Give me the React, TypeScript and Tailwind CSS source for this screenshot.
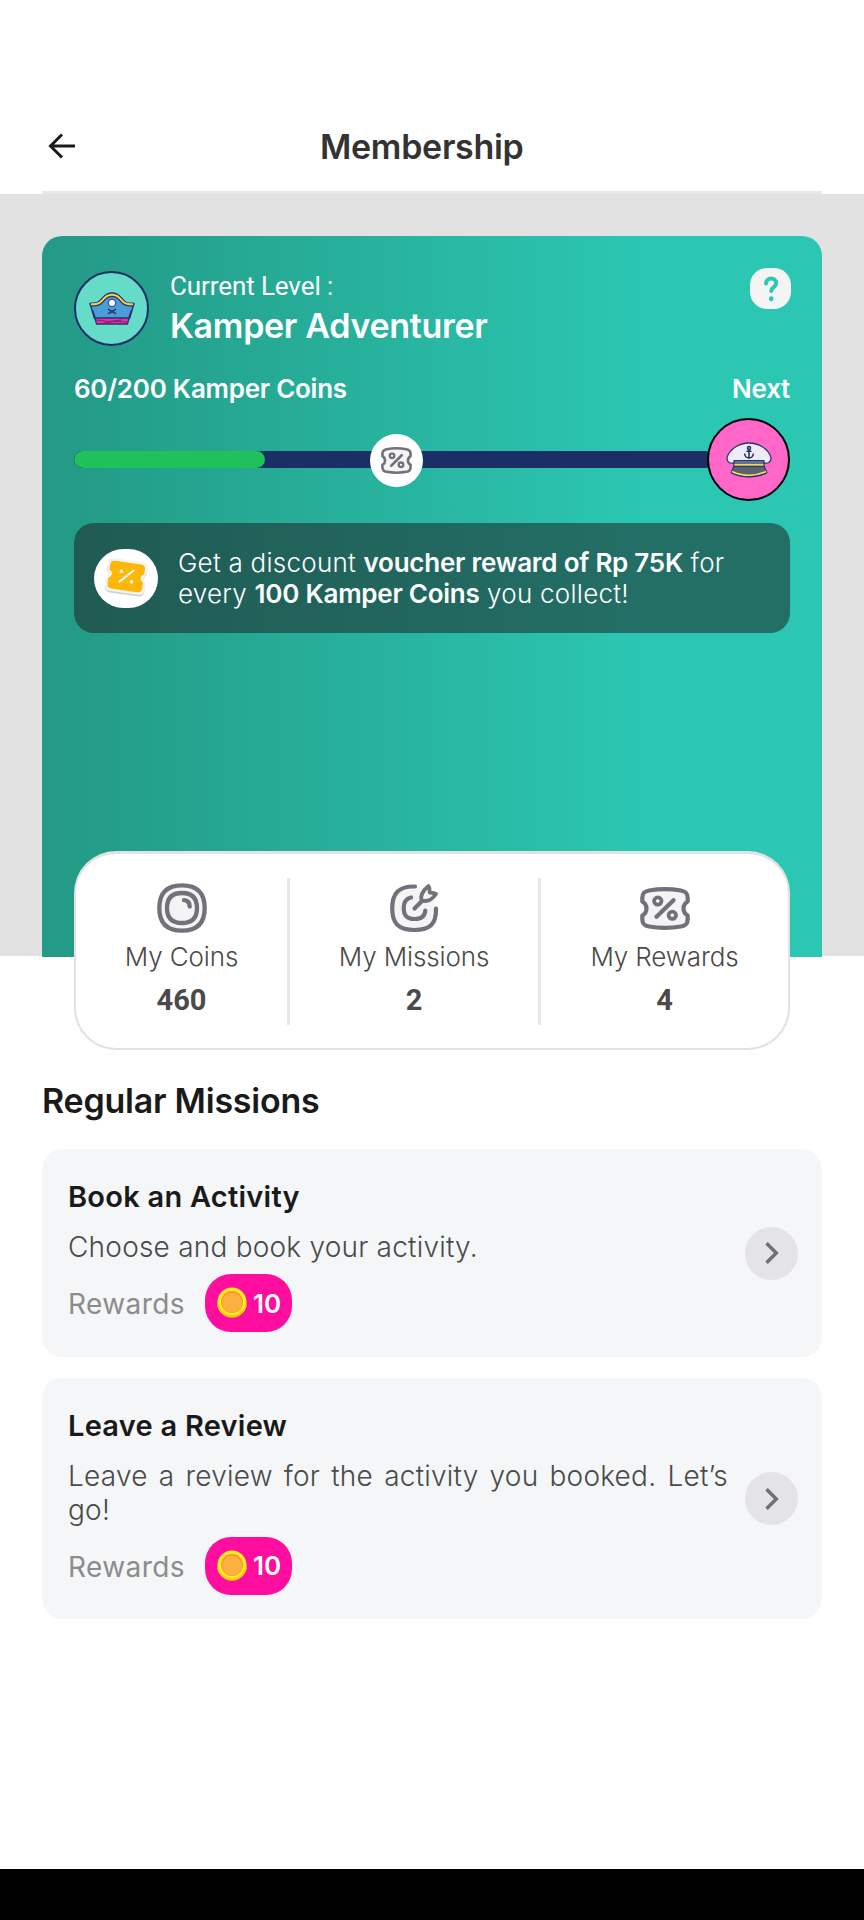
import type { ReactNode } from 'react';

const missions = [
  { title: 'Book an Activity', text: 'Choose and book your activity.', reward: 10, height: 'h-[208px]' },
  { title: 'Leave a Review', text: 'Leave a review for the activity you booked. Let’s go!', reward: 10, height: 'h-[241px]' },
];

function BackIcon() {
  return (
    <svg width="28" height="26" viewBox="0 0 28 26" fill="none" stroke="#1a1a1a" strokeWidth="3">
      <path d="M14 1.5 2.5 13 14 24.5M2.5 13H27" />
    </svg>
  );
}

function PirateHat() {
  return (
    <svg width="46" height="34" viewBox="0 0 46 34" strokeLinejoin="round">
      <path d="M1 11.5 5.5 26.5h35L45 11.5C36 12.5 35 9 32 5.5 27-.5 19-.5 14 5.5 11 9 9 12.5 1 11.5Z" fill="#4a9cdb" stroke="#24366f" strokeWidth="1.5" />
      <path d="M2 12.5c8 .8 10-2.5 13-5.8 4.5-5 11.5-5 16 0 3 3.3 5 6.6 13 5.8" fill="none" stroke="#24366f" strokeWidth="4" />
      <path d="M2 12.2c8 .8 10-2.5 13-5.8 4.5-5 11.5-5 16 0 3 3.3 5 6.6 13 5.8" fill="none" stroke="#f7d04a" strokeWidth="2" />
      <path d="M6 26h34l-1.5 6h-31Z" fill="#f72ba6" stroke="#24366f" strokeWidth="1.3" />
      <path d="m7 28 13 1.5L33 28M15 31l10-1.5 13 .5" fill="none" stroke="#7a2675" strokeWidth="1" />
      <circle cx="23" cy="11" r="3.8" fill="#f3f7ff" stroke="#24366f" strokeWidth="1" />
      <path d="M19 17q4 4 8 0M19 22q4-4 8 0" fill="none" stroke="#24366f" strokeWidth="1.3" />
      <path d="M3.5 18.5 6 25M42.5 18.5 40 25" stroke="#24366f" strokeWidth="1.5" />
    </svg>
  );
}

function CaptainHat() {
  return (
    <svg width="46" height="36" viewBox="0 0 46 36" strokeLinejoin="round" stroke="#2c3570">
      <path d="M8 21C3 22 1 19.5 1 15.5 4 6 14 1 23 1s19 5 22 14.5c0 4-2 6.5-7 5.5Z" fill="#ececf7" strokeWidth="1.3" />
      <path d="M8 24C7 27 6 29 5 30.5 16 36 30 36 41 30.5 40 29 39 27 38 24Z" fill="#5b6270" strokeWidth="1.2" />
      <path d="M5.8 29.5c11 5 23.4 5 34.4 0" fill="none" stroke="#f6dc4f" strokeWidth="1.7" />
      <path d="M5 31c11 5.3 25 5.3 36 0" fill="none" strokeWidth="1" />
      <path d="M8 18.5h30v6H8Z" fill="#66708f" strokeWidth="1.2" />
      <path d="M8.5 22.8h29" stroke="#f6dc4f" strokeWidth="1.5" />
      <g fill="none" stroke="#1f2c66" strokeWidth="1.5">
        <circle cx="23" cy="6" r="1.5" />
        <path d="M23 7.5v8M20.5 9.2h5M18.6 11.5c.4 3 2.2 4.5 4.4 4.5s4-1.5 4.4-4.5" />
      </g>
    </svg>
  );
}

function VoucherIcon({ width, height }: { width: number; height: number }) {
  return (
    <svg width={width} height={height} viewBox="0 0 50 44" preserveAspectRatio="none" stroke="#71717a" strokeWidth="4.2" strokeLinecap="round" strokeLinejoin="round">
      <path d="M2.3 14.8V11C2.3 5.8 4.8 4.3 9 3.5 19 1.8 31 1.8 41 3.5c4.2.8 6.7 2.3 6.7 7.5v3.8c-5.6 3.4-5.6 11 0 14.4V33c0 5.2-2.5 6.7-6.7 7.5-10 1.7-22 1.7-32 0-4.2-.8-6.7-2.3-6.7-7.5v-3.8c5.6-3.4 5.6-11 0-14.4Z" fill="#f4f4f5" />
      <path d="M33.5 13.5 16.5 30.5" />
      <circle cx="17.8" cy="14.4" r="3.7" fill="#fff" strokeWidth="3.8" />
      <circle cx="32.3" cy="29" r="3.7" fill="#fff" strokeWidth="3.8" />
    </svg>
  );
}

function CoinsIcon() {
  return (
    <svg width="50" height="50" viewBox="0 0 50 50" fill="#f4f4f5" stroke="#71717a" strokeWidth="4.3" strokeLinecap="round">
      <path d="M25 2.3C40 2.3 47.7 10 47.7 25S40 47.7 25 47.7 2.3 40 2.3 25 10 2.3 25 2.3Z" />
      <path d="M25 10C35 10 40 15 40 25S35 40 25 40 10 35 10 25 15 10 25 10Z" />
      <path d="M27 17.2c3.8.2 5.5 2.3 5.7 6.3" fill="none" />
    </svg>
  );
}

function MissionsIcon() {
  return (
    <svg width="50" height="50" viewBox="0 0 50 50" fill="none" stroke="#71717a" strokeWidth="4.2" strokeLinecap="round" strokeLinejoin="round">
      <path d="M26 3.5C10 3 3.2 10 3.2 25.5S10 47 25.5 47 47.5 41 47 25L44 12 35 5Z" fill="#f4f4f5" stroke="none" />
      <path d="M26 3.5C10 3 3.2 10 3.2 25.5S10 47 25.5 47 47.5 41 47 25.5" />
      <path d="M22 14.5c-5 1.2-7.3 4.5-7.3 10.5 0 7.5 3.2 11 10.8 11 7 0 10.3-2.5 10.8-8.5" />
      <path d="m25.5 25.5 8-8" />
      <path d="M32.5 17.5c-1.5-5 .5-9 7-14.5 1.5 2.5 1.2 4.5 1.2 6.5 2 .2 4 .2 6.3 1.5-4.5 6.5-9.5 8-14.5 6.5Z" fill="#f4f4f5" strokeWidth="3.8" />
    </svg>
  );
}

function RewardTicket() {
  return (
    <svg width="46" height="42" viewBox="0 0 46 42">
      <g transform="rotate(8 23 21)">
        <path d="M9 4.5h28q6 0 6 6v4c-3 2-3 7 0 9v7q0 6-6 6H9q-6 0-6-6v-7c3-2 3-7 0-9v-4q0-6 6-6Z" fill="#cfcfcf" transform="translate(0 1)" />
        <path d="M9 3h28q6 0 6 6v5.5c-3 2-3 7 0 9V30q0 6-6 6H9q-6 0-6-6v-6.5c3-2 3-7 0-9V9q0-6 6-6Z" fill="#f3f3f3" />
        <path d="M10 5.5h26q4.5 0 4.5 4.5v5c-4 1.5-4 6.5 0 8v6q0 4.5-4.5 4.5H10q-4.5 0-4.5-4.5v-6c4-1.5 4-6.5 0-8v-5q0-4.5 4.5-4.5Z" fill="#ffb606" />
        <path d="M29.5 12.5 17 25.5" stroke="#fff" strokeWidth="2" strokeLinecap="round" />
        <circle cx="17.5" cy="15" r="1.8" fill="#fff" />
        <circle cx="29" cy="24" r="1.8" fill="#fff" />
      </g>
    </svg>
  );
}

function GoldCoin() {
  return (
    <svg width="30" height="32" viewBox="0 0 30 32">
      <circle cx="15" cy="16.5" r="14.5" fill="#f7941e" />
      <circle cx="15" cy="15" r="14.5" fill="#fbed21" />
      <path d="M.8 17.5a14.5 14.5 0 0 0 28.4 0" fill="none" stroke="#fcd01f" strokeWidth="2" />
      <circle cx="15" cy="15" r="11" fill="#f7941e" />
      <circle cx="15" cy="15.8" r="10.2" fill="#fbb040" />
    </svg>
  );
}

function Stat({ icon, label, value, className }: { icon: ReactNode; label: string; value: number; className: string }) {
  return (
    <div className={`flex flex-col items-center ${className}`}>
      <div className="flex h-[50px] items-center">{icon}</div>
      <p className="mt-2 h-8 whitespace-nowrap text-[26px] leading-8 font-light tracking-[-0.13px] text-[#4a4a4a]">{label}</p>
      <p className="mt-[9px] h-9 font-[Roboto] text-[29px] leading-9 font-bold text-[#4a4a4a]">{value}</p>
    </div>
  );
}

export default function App() {
  return (
    <main className="flex h-[1920px] w-[864px] flex-col overflow-hidden bg-white font-[Inter,sans-serif]">
      {/* Header */}
      <header className="flex h-[194px] shrink-0 flex-col px-[42px] pt-[127px]">
        <div className="flex h-[64px] items-start">
          <div className="w-[278px] pt-[6px] pl-[6px]">
            <BackIcon />
          </div>
          <h1 className="text-[34px] leading-10 font-semibold tracking-[-0.3px] text-[#333]">Membership</h1>
        </div>
        <div className="h-[3px] bg-[#e8e8e8]" />
      </header>

      {/* Level card */}
      <section className="h-[762px] shrink-0 bg-[#e2e2e2] px-[42px] pt-[42px]">
        <div className="h-[721px] rounded-t-[20px] bg-[linear-gradient(90deg,#239b87_4%,#2bc7b2_77%)] px-8 pt-8 text-white">
          <div className="flex h-[82px]">
            <div className="mt-[3px] flex size-[75px] items-center justify-center rounded-full border-2 border-[#1c2f68] bg-[#65dcc8]">
              <PirateHat />
            </div>
            <div className="ml-[21px] flex-1">
              <p className="pt-[2px] font-[Roboto] text-[26px] leading-8 tracking-[-0.1px]">Current Level :</p>
              <p className="mt-[4px] text-[34px] leading-10 font-semibold tracking-[-0.3px]">Kamper Adventurer</p>
            </div>
            <div className="-mr-px flex size-[41px] items-center justify-center rounded-[17px] bg-[#f4f4f5]">
              <svg width="18" height="26" viewBox="0 0 18 26" fill="none" stroke="#2bc7b2" strokeWidth="4" strokeLinecap="round">
                <path d="M4 7.5C4.2 4.5 6.2 2.5 9.2 2.5s5 2 5 4.8c0 4-5 4.2-5 7.7" />
                <path d="M9.2 22.5v.6" strokeWidth="4.5" />
              </svg>
            </div>
          </div>

          <div className="mt-[23px] flex justify-between text-[26px] leading-8 font-semibold tracking-[-0.26px]">
            <p>60/200 Kamper Coins</p>
            <p>Next</p>
          </div>

          {/* Progress track with its milestones */}
          <div className="relative mt-[13px] flex h-[83px] items-center">
            <div className="h-[17px] w-[640px] overflow-hidden rounded-full bg-[#1b2f66]">
              <div className="h-full w-[191px] rounded-full bg-[#1fc15b]" />
            </div>
            <div className="absolute top-[16px] left-[296px] flex size-[53px] items-center justify-center rounded-full bg-white">
              <VoucherIcon width={31} height={27} />
            </div>
            <div className="absolute top-0 right-0 flex size-[83px] items-center justify-center rounded-full border-2 border-black bg-[#ff66c8]">
              <CaptainHat />
            </div>
          </div>

          <div className="mt-[22px] flex h-[110px] items-center rounded-[20px] bg-[#1e2728]/55 pl-5">
            <div className="flex h-[59px] w-16 items-center justify-center rounded-[30px] bg-white">
              <RewardTicket />
            </div>
            <p className="ml-[20px] whitespace-nowrap text-[26px] leading-[31px] font-light tracking-[0.25px]">
              Get a discount <span className="font-semibold tracking-[-0.25px]">voucher reward of Rp 75K</span> for
              <br />
              every <span className="font-semibold tracking-[-0.25px]">100 Kamper Coins</span> you collect!
            </p>
          </div>
        </div>
      </section>

      {/* Stats */}
      <section className="relative mx-[74px] -mt-[105px] flex h-[199px] shrink-0 rounded-[42px] border-2 border-t-[3px] border-[#e2e2e4] bg-white">
        <Stat className="w-[211px] pt-[29px]" icon={<CoinsIcon />} label="My Coins" value={460} />
        <div className="mt-[24px] h-[147px] w-[3px] bg-[#e7e7ea]" />
        <Stat className="w-[248px] pt-[29px]" icon={<MissionsIcon />} label="My Missions" value={2} />
        <div className="mt-[24px] h-[147px] w-[3px] bg-[#e7e7ea]" />
        <Stat className="flex-1 pt-[29px]" icon={<VoucherIcon width={50} height={43} />} label="My Rewards" value={4} />
      </section>

      {/* Missions */}
      <section className="px-[42px] pt-[31px]">
        <h2 className="h-10 text-[34px] leading-10 font-semibold tracking-[-0.23px] text-[#1a1a1a]">Regular Missions</h2>
        <div className="mt-[28px] flex flex-col gap-[21px]">
          {missions.map((mission) => (
            <article key={mission.title} className={`flex items-center rounded-[20px] bg-[#f4f6f8] pr-6 pl-[26px] ${mission.height}`}>
              <div className="h-full w-[660px] pt-[30px]">
                <h3 className="h-9 text-[29px] leading-9 font-semibold tracking-[0.25px] text-[#1a1a1a]">{mission.title}</h3>
                <p className="mt-[16px] text-justify text-[28px] leading-[33.5px] font-light tracking-[0.22px] text-[#4a4a4a]">{mission.text}</p>
                <div className="mt-[9.5px] flex items-center">
                  <p className="w-[137px] pt-[2px] text-[28px] leading-8 tracking-[0.4px] text-[#8c8c8c]">Rewards</p>
                  <div className="flex h-[58px] w-[87px] items-center rounded-[26px] bg-[#ff0d9e] pl-3">
                    <GoldCoin />
                    <span className="ml-[6px] pt-px text-[26px] leading-8 font-semibold text-white">{mission.reward}</span>
                  </div>
                </div>
              </div>
              <div className="ml-auto flex size-[53px] items-center justify-center rounded-full bg-[#e4e4e6]">
                <svg width="14" height="22" viewBox="0 0 14 22" fill="none" stroke="#71717a" strokeWidth="3.5">
                  <path d="m1.5 1.2 9.8 9.8-9.8 9.8" />
                </svg>
              </div>
            </article>
          ))}
        </div>
      </section>

      <footer className="mt-auto h-[51px] shrink-0 bg-black" />
    </main>
  );
}
